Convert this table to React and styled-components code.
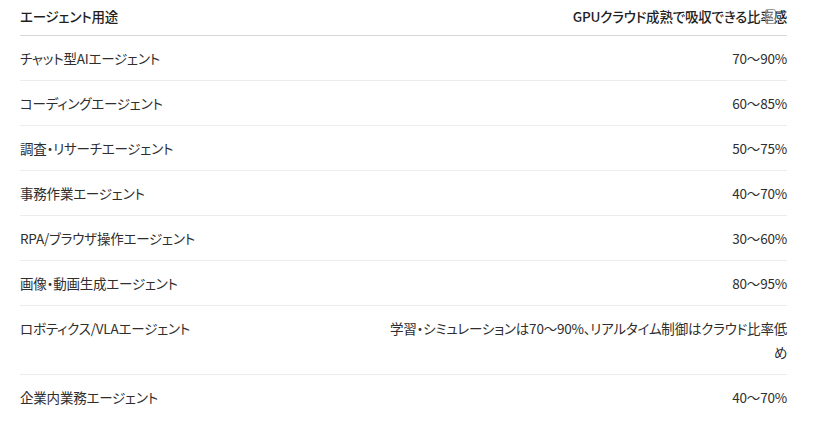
import React from "react";
import styled, { createGlobalStyle } from "styled-components";

const Global = createGlobalStyle`
  html, body { margin: 0; padding: 0; background: #ffffff; }
  body {
    font-family: "Noto Sans CJK JP", "Noto Sans", sans-serif;
    font-feature-settings: "palt";
    color: #2e2e2e;
  }
`;

const Page = styled.div`
  padding: 0 44px 0 20px;
  position: relative;
`;

const Table = styled.table`
  width: 767px;
  border-collapse: collapse;
  font-size: 13.5px;
  line-height: 24px;
  letter-spacing: -0.2px;
`;

const HeadCell = styled.th`
  padding: 4px 0 7px;
  font-weight: 500;
  color: #1f1f1f;
  text-align: ${(p) => (p.$right ? "right" : "left")};
  border-bottom: 1px solid #d6d6d6;
  position: relative;
`;

const Row = styled.tr`
  border-bottom: 1px solid #ececec;
  &:last-child { border-bottom: none; }
`;

const Cell = styled.td`
  padding: 10px 0;
  vertical-align: top;
  text-align: ${(p) => (p.$right ? "right" : "left")};
  width: ${(p) => p.$w || "auto"};
`;

const CopyMark = styled.span`
  position: absolute;
  right: 11px;
  top: 9px;
  width: 9px;
  height: 13px;
  border: 1.5px solid rgba(120, 120, 120, 0.75);
  border-radius: 3px;
  background: rgba(255, 255, 255, 0.35);
`;

const rows = [
  ["チャット型AIエージェント", "70〜90%"],
  ["コーディングエージェント", "60〜85%"],
  ["調査・リサーチエージェント", "50〜75%"],
  ["事務作業エージェント", "40〜70%"],
  ["RPA/ブラウザ操作エージェント", "30〜60%"],
  ["画像・動画生成エージェント", "80〜95%"],
  [
    "ロボティクス/VLAエージェント",
    "学習・シミュレーションは70〜90%、リアルタイム制御はクラウド比率低め",
  ],
  ["企業内業務エージェント", "40〜70%"],
];

export default function App() {
  return (
    <>
      <Global />
      <Page>
        <Table>
          <thead>
            <tr>
              <HeadCell>エージェント用途</HeadCell>
              <HeadCell $right>
                GPUクラウド成熟で吸収できる比率感
                <CopyMark />
              </HeadCell>
            </tr>
          </thead>
          <tbody>
            {rows.map(([a, b]) => (
              <Row key={a}>
                <Cell>{a}</Cell>
                <Cell $right $w="404px">{b}</Cell>
              </Row>
            ))}
          </tbody>
        </Table>
      </Page>
    </>
  );
}
